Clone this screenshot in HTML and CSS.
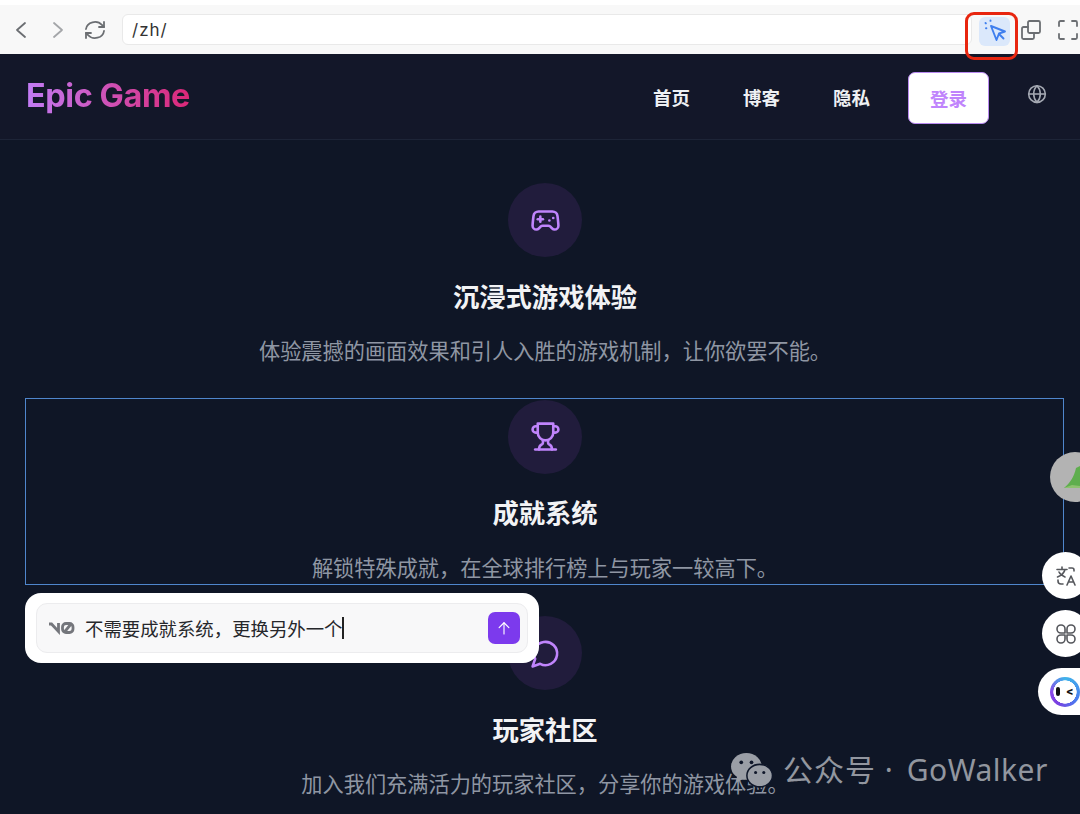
FILE: index.html
```html
<!DOCTYPE html>
<html lang="zh">
<head>
<meta charset="utf-8">
<title>Epic Game</title>
<link rel="stylesheet" href="styles.css">
</head>
<body>
<div class="page">
  <header class="toolbar">
    <div class="tb-nav">
      <svg class="tb-icon" viewBox="0 0 24 24"><path d="M16 5l-8 7 8 7"/></svg>
      <svg class="tb-icon muted" viewBox="0 0 24 24"><path d="M8 5l8 7-8 7"/></svg>
      <svg class="tb-icon" viewBox="0 0 24 24"><path d="M3 11a9 8 0 0 1 16-4l2 2"/><path d="M21 4v5h-5"/><path d="M21 13a9 8 0 0 1-16 4l-2-2"/><path d="M3 20v-5h5"/></svg>
    </div>
    <div class="url">/zh/</div>
    <div class="tb-actions">
      <span class="pick">
        <svg class="pick-icon" viewBox="0 0 24 24"><path d="M8 7l14 5.500-6 2-2.500 6.500z"/><path d="M16 15l4.500 4.500"/><path d="M2.500 4l.4.4M7.500 1.500v.4M3 9.300h.4"/></svg>
      </span>
      <svg class="tb-icon tb-copy" viewBox="0 0 24 24"><rect x="9" y="3" width="12" height="12" rx="1.500"/><path d="M9 9H4.500A1.500 1.500 0 0 0 3 10.500v9A1.500 1.500 0 0 0 4.500 21h9a1.500 1.500 0 0 0 1.500-1.500V15"/></svg>
      <svg class="tb-icon tb-full" viewBox="0 0 24 24"><path d="M3 8V4.500A1.500 1.500 0 0 1 4.500 3H8M16 3h3.500A1.500 1.500 0 0 1 21 4.500V8M21 16v3.500a1.500 1.500 0 0 1-1.500 1.500H16M8 21H4.500A1.500 1.500 0 0 1 3 19.500V16"/></svg>
    </div>
  </header>

  <nav class="site-nav">
    <div class="logo">Epic Game</div>
    <div class="menu">
      <a class="menu-link">首页</a>
      <a class="menu-link">博客</a>
      <a class="menu-link">隐私</a>
      <a class="login">登录</a>
      <svg class="globe" viewBox="0 0 24 24"><circle cx="12" cy="12" r="10"/><path d="M12 2a14.500 14.500 0 0 0 0 20 14.500 14.500 0 0 0 0-20"/><path d="M2 12h20"/></svg>
    </div>
  </nav>

  <main class="features">
    <section class="feature">
      <div class="feature-icon">
        <svg viewBox="0 0 24 24"><line x1="6" x2="10" y1="11" y2="11"/><line x1="8" x2="8" y1="9" y2="13"/><line x1="15" x2="15.01" y1="12" y2="12"/><line x1="18" x2="18.01" y1="10" y2="10"/><path d="M17.32 5H6.68a4 4 0 0 0-3.978 3.59c-.006.052-.01.101-.017.152C2.604 9.416 2 14.456 2 16a3 3 0 0 0 3 3c1 0 1.500-.5 2-1l1.414-1.414A2 2 0 0 1 9.828 16h4.344a2 2 0 0 1 1.414.586L17 18c.5.5 1 1 2 1a3 3 0 0 0 3-3c0-1.545-.604-6.584-.685-7.258-.007-.05-.011-.1-.017-.151A4 4 0 0 0 17.32 5z"/></svg>
      </div>
      <h2 class="feature-title">沉浸式游戏体验</h2>
      <p class="feature-desc">体验震撼的画面效果和引人入胜的游戏机制，让你欲罢不能。</p>
    </section>
    <section class="feature">
      <div class="feature-icon">
        <svg viewBox="0 0 24 24"><path d="M6 9H4.500a2.500 2.500 0 0 1 0-5H6"/><path d="M18 9h1.500a2.500 2.500 0 0 0 0-5H18"/><path d="M4 22h16"/><path d="M10 14.660V17c0 .55-.47.98-.97 1.210C7.850 18.750 7 20.240 7 22"/><path d="M14 14.660V17c0 .55.47.98.97 1.210C16.150 18.750 17 20.240 17 22"/><path d="M18 2H6v7a6 6 0 0 0 12 0V2Z"/></svg>
      </div>
      <h2 class="feature-title">成就系统</h2>
      <p class="feature-desc">解锁特殊成就，在全球排行榜上与玩家一较高下。</p>
    </section>
    <section class="feature">
      <div class="feature-icon">
        <svg viewBox="0 0 24 24"><path d="M7.900 20A9 9 0 1 0 4 16.100L2 22Z"/></svg>
      </div>
      <h2 class="feature-title">玩家社区</h2>
      <p class="feature-desc">加入我们充满活力的玩家社区，分享你的游戏体验。</p>
    </section>
  </main>

  <div class="red-mark"></div>
  <div class="selection"></div>

  <div class="prompt">
    <div class="prompt-inner">
      <svg class="v0" viewBox="0 0 27 14"><path d="M1 3h2.500l7 7.500V2"/><rect x="14.500" y="2.500" width="10.500" height="9" rx="3.500"/><path d="M16.500 11l6.500-8"/></svg>
      <div class="prompt-text">不需要成就系统，更换另外一个<span class="caret"></span></div>
      <button class="send" type="button"><svg viewBox="0 0 24 24"><path d="M12 20V5"/><path d="M5.500 11.500L12 5l6.500 6.500"/></svg></button>
    </div>
  </div>

  <aside class="side">
    <div class="side-avatar"><svg viewBox="0 0 30 50"><path d="M14 36C20 31 24 25 26 16l4-2v20z" fill="#5fae4e"/><path d="M14 36l8-3 8 1v2z" fill="#8ec270"/></svg></div>
    <div class="side-btn">
      <svg viewBox="0 0 24 24"><path d="M3 5.500h10M8 3v2.500M11 5.500c-.8 3.500-3.500 6-7.500 7.500M5 8c1.200 2.500 3.500 4 6 5"/><path d="M15 4h3a2 2 0 0 1 2 2v1"/><path d="M4 16v1a3 3 0 0 0 3 3h2"/><path d="M13 21l4-9 4 9M14.500 18h5"/></svg>
    </div>
    <div class="side-btn">
      <svg viewBox="0 0 24 24"><path d="M11 11H7a4 4 0 1 1 4-4z"/><path d="M13 11h4a4 4 0 1 0-4-4z"/><path d="M11 13H7a4 4 0 1 0 4 4z"/><path d="M13 13h4a4 4 0 1 1-4 4z"/></svg>
    </div>
    <div class="side-pill">
      <span class="face"><span class="eye"></span><span class="wink">&lt;</span></span>
    </div>
  </aside>

  <div class="watermark">
    <svg class="wechat" viewBox="0 0 42 36"><ellipse cx="16" cy="14" rx="15" ry="13" fill="#9a9ea6"/><path d="M7 23l-1 7 7-4z" fill="#9a9ea6"/><ellipse cx="29" cy="23" rx="12.500" ry="11" fill="#9a9ea6" stroke="#0f172a" stroke-width="1.500"/><circle cx="11" cy="10" r="1.800" fill="#0f172a"/><circle cx="21" cy="10" r="1.800" fill="#0f172a"/><circle cx="25" cy="20" r="1.500" fill="#0f172a"/><circle cx="33" cy="20" r="1.500" fill="#0f172a"/></svg>
    <span class="wm-text">公众号 · <span class="wm-name">GoWalker</span></span>
  </div>
</div>
</body>
</html>
```
FILE: styles.css
```css
* { box-sizing: border-box; }
html, body { margin: 0; padding: 0; }
body {
  width: 1080px;
  height: 814px;
  overflow: hidden;
  font-family: Inter, "Noto Sans CJK SC", sans-serif;
  background: #0f172a;
}
.page { position: relative; width: 1080px; height: 814px; overflow: hidden; background: #0f1626; }

.toolbar {
  height: 54px;
  padding: 0 0 0 9px;
  display: flex;
  align-items: center;
  background: #f8f8f8;
  border-top: 5px solid #fff;
}
.tb-nav { display: flex; align-items: center; gap: 13px; width: 113px; flex: none; }
.tb-icon { width: 24px; height: 24px; fill: none; stroke: #6b6e72; stroke-width: 1.800; stroke-linecap: round; stroke-linejoin: round; flex: none; }
.tb-icon.muted { stroke: #a4a6a9; }
.url {
  width: 850px;
  height: 31px;
  flex: none;
  padding-left: 9px;
  display: flex;
  align-items: center;
  background: #fff;
  border: 1px solid #e9e9e9;
  border-radius: 6px;
  font-size: 17px;
  letter-spacing: 1px;
  color: #333;
}
.tb-actions { display: flex; align-items: center; margin-left: 7px; flex: none; }
.pick { width: 31px; height: 29px; margin-top: 3px; background: #dbe8fb; border-radius: 6px; display: flex; align-items: center; justify-content: center; }
.pick-icon { width: 24px; height: 24px; fill: none; stroke: #3f7fee; stroke-width: 1.900; stroke-linecap: round; stroke-linejoin: round; }
.tb-copy { margin-left: 9px; }
.tb-full { margin-left: 13px; }

.site-nav {
  height: 86px;
  padding: 0 33px 0 26px;
  display: flex;
  align-items: center;
  justify-content: space-between;
  background: #131729;
  border-bottom: 1px solid #1d2437;
}
.logo {
  font-size: 32.400px;
  font-weight: 700;
  letter-spacing: -0.4px;
  background: linear-gradient(90deg, #c27cf5, #db2777);
  -webkit-background-clip: text;
  background-clip: text;
  color: transparent;
  margin-top: -2px;
}
.menu { display: flex; align-items: center; }
.menu-link { width: 37px; margin-right: 53px; font-size: 18.500px; font-weight: 600; color: #eef0f3; white-space: nowrap; }
.menu-link:nth-child(3) { margin-right: 38px; }
.login {
  width: 81px;
  height: 52px;
  margin-top: 2px;
  display: flex;
  align-items: center;
  justify-content: center;
  background: #fff;
  border: 1.500px solid #b98af0;
  border-radius: 7px;
  font-size: 18.500px;
  font-weight: 600;
  color: #c084fc;
  margin-right: 38px;
}
.globe { width: 20px; height: 20px; margin-top: -6px; fill: none; stroke: #a4a8b2; stroke-width: 1.900; }

.features { display: flex; flex-direction: column; align-items: center; padding: 43px 0 0 10px; }
.feature { height: 216.500px; width: 100%; flex: none; display: flex; flex-direction: column; align-items: center; }
.feature-icon {
  width: 74px;
  height: 74px;
  border-radius: 50%;
  background: #211c3c;
  display: flex;
  align-items: center;
  justify-content: center;
  flex: none;
}
.feature-icon svg { width: 31px; height: 31px; fill: none; stroke: #c084fc; stroke-width: 2; stroke-linecap: round; stroke-linejoin: round; }
.feature-title { margin: 21.500px 0 0; font-size: 26.300px; line-height: 38px; font-weight: 700; color: #f2f3f5; }
.feature-desc { margin: 19.500px 0 0; font-size: 21.200px; line-height: 30px; font-weight: 400; color: #8f96a3; white-space: nowrap; }

.red-mark { position: absolute; left: 965px; top: 12px; width: 53px; height: 48px; border: 3.500px solid #e8260f; border-radius: 9px; }
.selection { position: absolute; left: 25px; top: 398px; width: 1039px; height: 187px; border: 1.500px solid #4f86cc; }

.prompt { position: absolute; left: 25px; top: 593px; width: 514px; height: 70px; padding: 10px 11px; background: #fff; border-radius: 16px; }
.prompt-inner {
  height: 50px;
  display: flex;
  align-items: center;
  padding: 0 7px 0 11px;
  background: #f8f8f9;
  border: 1px solid #ececee;
  border-radius: 11px;
}
.v0 { width: 27px; height: 14px; flex: none; fill: none; stroke: #74767c; stroke-width: 2.800; }
.prompt-text { flex: 1; margin-left: 10px; font-size: 18.400px; color: #26272b; white-space: nowrap; display: flex; align-items: center; }
.caret { display: inline-block; width: 1.500px; height: 22px; background: #222; }
.send { width: 32px; height: 32px; padding: 0; border: 0; border-radius: 7px; background: #7c3aed; display: flex; align-items: center; justify-content: center; }
.send svg { width: 18px; height: 18px; fill: none; stroke: #fff; stroke-width: 1.500; stroke-linecap: round; stroke-linejoin: round; }

.side { position: absolute; left: 1038px; top: 452px; width: 60px; display: flex; flex-direction: column; align-items: flex-start; }
.side-avatar { width: 50px; height: 50px; margin-left: 12px; border-radius: 50%; background: #b3b3b3; overflow: hidden; }
.side-avatar svg { display: block; width: 30px; height: 50px; }
.side-btn { width: 47px; height: 47px; margin-left: 4px; margin-bottom: 11px; border-radius: 50%; background: #fff; display: flex; align-items: center; justify-content: center; }
.side-avatar + .side-btn { margin-top: 50px; }
.side-btn svg { width: 24px; height: 24px; fill: none; stroke: #55575c; stroke-width: 1.600; stroke-linecap: round; stroke-linejoin: round; }
.side-pill { width: 60px; height: 47px; border-radius: 24px 0 0 24px; background: #fff; display: flex; align-items: center; padding-left: 12px; }
.face {
  width: 30px; height: 30px; flex: none; border-radius: 50%;
  background: radial-gradient(closest-side, #fff 76%, transparent 79%), conic-gradient(#3fb4ea, #4a7cf0 35%, #7a3fe0 60%, #8a4ae8 75%, #3fb4ea);
  display: flex; align-items: center; justify-content: center; gap: 6px;
}
.eye { width: 3.500px; height: 9px; border-radius: 2px; background: #111; }
.wink { font-size: 11px; line-height: 11px; font-weight: 800; color: #111; }

.watermark { position: absolute; left: 730px; top: 750px; display: flex; align-items: center; gap: 10px; }
.wechat { width: 43px; height: 37px; flex: none; }
.wm-text { font-family: "Noto Sans", "Noto Sans CJK SC", sans-serif; font-size: 30px; line-height: 40px; letter-spacing: 1px; color: #92969f; white-space: nowrap; }
.wm-name { margin-left: 4px; letter-spacing: 0.500px; }
```
